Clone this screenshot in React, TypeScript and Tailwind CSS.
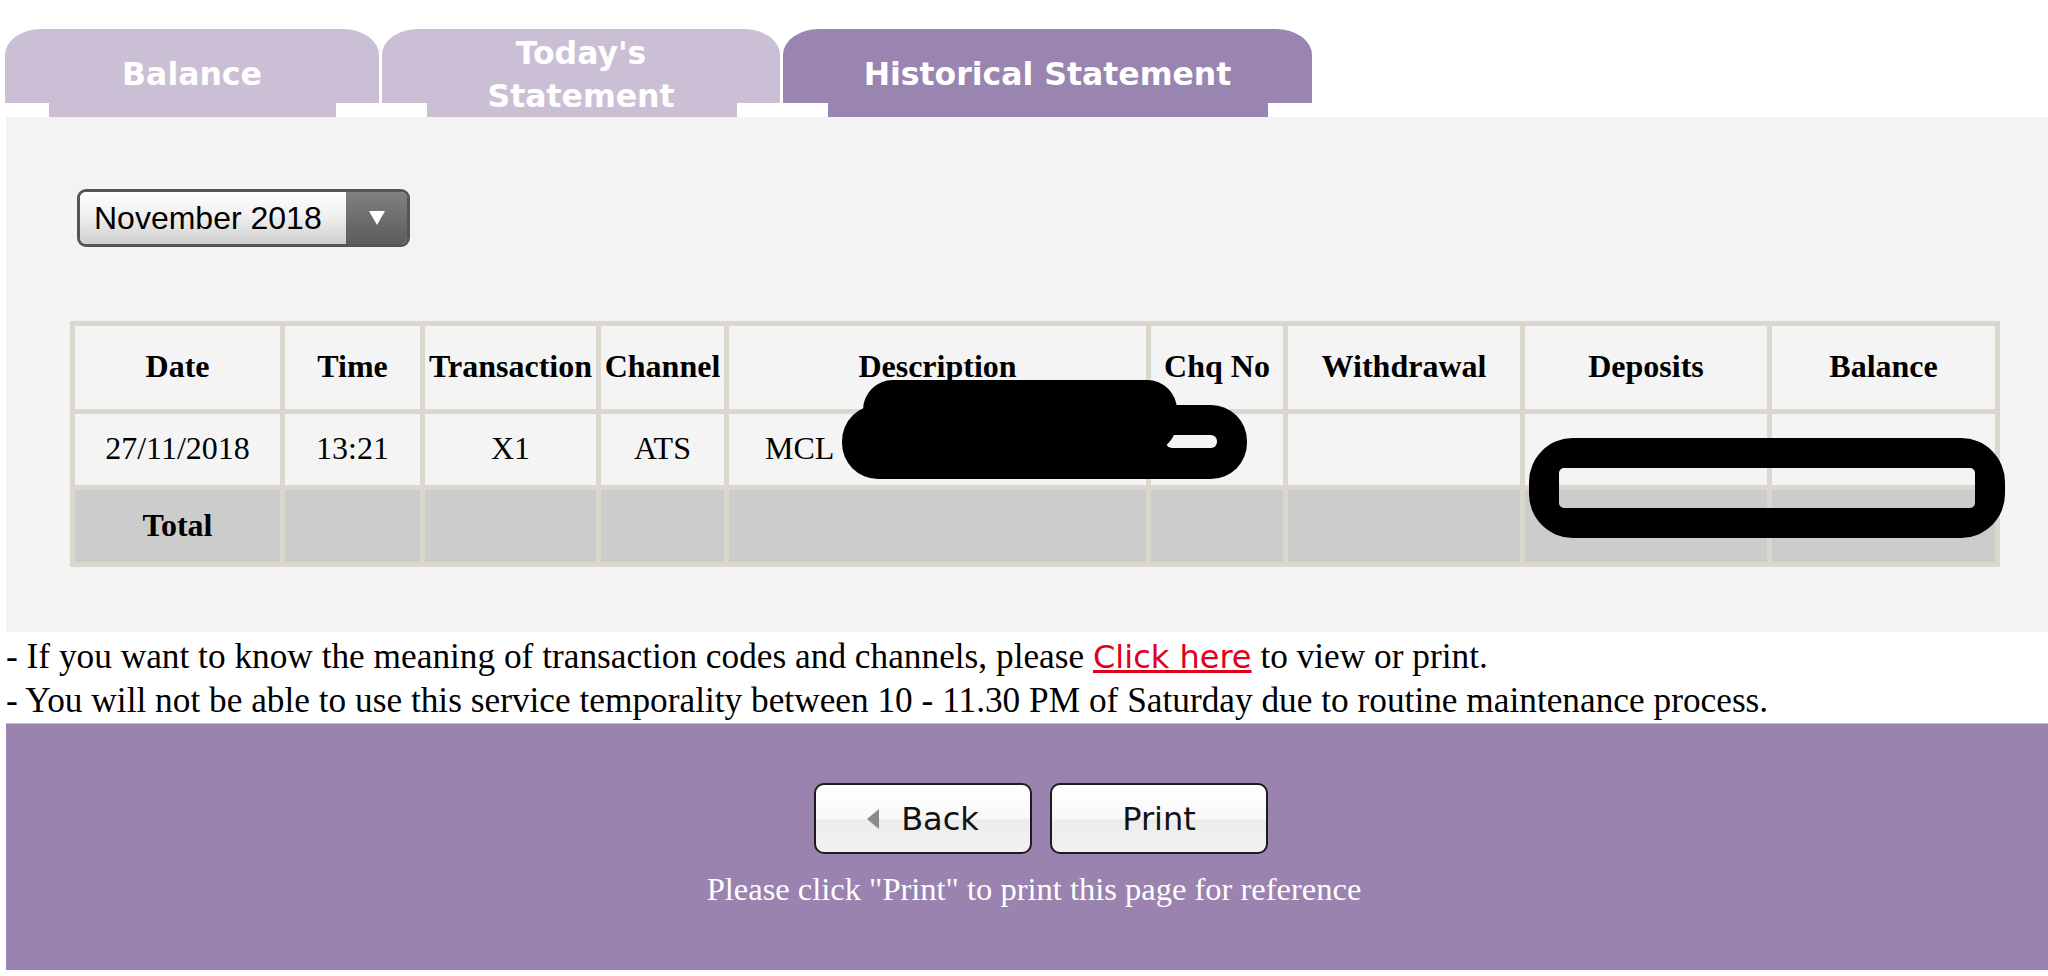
import type { ReactNode } from 'react'

type TabProps = {
  width: string
  inset: string
  active?: boolean
  children: ReactNode
}

function Tab({ width, inset, active, children }: TabProps) {
  const bg = active ? 'bg-[#9a84b0]' : 'bg-[#cbbfd6]'
  return (
    <div className={`flex flex-col ${width}`}>
      <div
        className={`flex h-[74px] items-center justify-center rounded-t-[36px_26px] pt-[17px] text-center font-['DejaVu_Sans',sans-serif] text-[31.5px] font-bold leading-[43px] text-white ${bg}`}
      >
        <div className="relative z-10">{children}</div>
      </div>
      <div className={`h-[14px] ${inset} ${bg}`} />
    </div>
  )
}

const headers = [
  'Date',
  'Time',
  'Transaction',
  'Channel',
  'Description',
  'Chq No',
  'Withdrawal',
  'Deposits',
  'Balance',
]

const colWidths = [
  'w-[205px]',
  'w-[135px]',
  'w-[171px]',
  'w-[123px]',
  'w-[417px]',
  'w-[132px]',
  'w-[232px]',
  'w-[242px]',
  'w-[223px]',
]

function StatementTable() {
  return (
    <table className="ml-[64px] mt-[74px] w-[1930px] table-fixed border-separate border-spacing-[5px] bg-[#dbd6ce] font-['Liberation_Serif',serif] text-[32px] text-black">
      <colgroup>
        {colWidths.map((w, i) => (
          <col key={i} className={w} />
        ))}
      </colgroup>
      <thead>
        <tr>
          {headers.map((h) => (
            <th key={h} className="h-[83px] bg-[#f4f4f4] p-0 pb-[4px] text-center align-middle font-bold whitespace-nowrap">
              {h}
            </th>
          ))}
        </tr>
      </thead>
      <tbody>
        <tr>
          <td className="h-[71px] bg-[#f4f4f4] p-0 pb-[3px] text-center align-middle">27/11/2018</td>
          <td className="bg-[#f4f4f4] p-0 pb-[3px] text-center align-middle">13:21</td>
          <td className="bg-[#f4f4f4] p-0 pb-[3px] text-center align-middle">X1</td>
          <td className="bg-[#f4f4f4] p-0 pb-[3px] text-center align-middle">ATS</td>
          <td className="bg-[#f4f4f4] p-0 pb-[3px] pl-[36px] text-left align-middle">MCL</td>
          <td className="bg-[#f4f4f4] p-0" />
          <td className="bg-[#f4f4f4] p-0" />
          <td className="bg-[#f4f4f4] p-0" />
          <td className="bg-[#f4f4f4] p-0" />
        </tr>
        <tr>
          <td className="h-[72px] bg-[#cccccc] p-0 pb-[3px] text-center align-middle font-bold">Total</td>
          {[0, 1, 2, 3, 4, 5, 6, 7].map((i) => (
            <td key={i} className="bg-[#cccccc] p-0" />
          ))}
        </tr>
      </tbody>
    </table>
  )
}

function MonthSelect() {
  return (
    <div className="ml-[71px] mt-[71px] flex h-[58px] w-[333px] overflow-hidden rounded-[9px] border-[3px] border-[#555555]">
      <div className="flex flex-1 items-center bg-[linear-gradient(#ffffff,#f0f0f0_45%,#cfcfcf)] pl-[14px] font-['Liberation_Sans',sans-serif] text-[32px] text-black">
        November 2018
      </div>
      <div className="flex w-[61px] items-center justify-center bg-[linear-gradient(#808080,#5c5c5c)]">
        <svg width="16" height="14" viewBox="0 0 16 14">
          <path d="M0 0 H16 L8 14 Z" fill="#ffffff" />
        </svg>
      </div>
    </div>
  )
}

function FooterButton({ children }: { children: ReactNode }) {
  return (
    <button className="flex h-[71px] w-[218px] items-center justify-center rounded-[10px] border-2 border-[#1c1c1c] bg-[linear-gradient(#ffffff_0%,#f8f8f8_50%,#ececec_52%,#f2f2f2_100%)] font-['DejaVu_Sans',sans-serif] text-[32px] text-[#111111]">
      {children}
    </button>
  )
}

function Redactions() {
  return (
    <svg className="pointer-events-none absolute left-0 top-0" width="2048" height="976">
      <rect x="842" y="405" width="405" height="74" rx="36" fill="#000" />
      <rect x="1166" y="435" width="51" height="13" rx="6" fill="#f4f4f4" />
      <rect x="863" y="380" width="314" height="72" rx="30" fill="#000" />
      <path
        fillRule="evenodd"
        fill="#000"
        d="M1573 438 H1961 A44 44 0 0 1 2005 482 V494 A44 44 0 0 1 1961 538 H1573 A44 44 0 0 1 1529 494 V482 A44 44 0 0 1 1573 438 Z M1564 468 H1970 A5 5 0 0 1 1975 473 V503 A5 5 0 0 1 1970 508 H1564 A5 5 0 0 1 1559 503 V473 A5 5 0 0 1 1564 468 Z"
      />
    </svg>
  )
}

export default function App() {
  return (
    <div className="relative h-[976px] w-[2048px] overflow-hidden bg-white">
      <div className="flex gap-[3px] pl-[5px] pt-[29px]">
        <Tab width="w-[374px]" inset="ml-[44px] mr-[43px]">
          Balance
        </Tab>
        <Tab width="w-[398px]" inset="ml-[45px] mr-[43px]">
          Today's
          <br />
          Statement
        </Tab>
        <Tab width="w-[529px]" inset="ml-[45px] mr-[44px]" active>
          Historical Statement
        </Tab>
      </div>

      <div className="ml-[6px] h-[515px] bg-[#f3f3f3] pt-px">
        <MonthSelect />
        <StatementTable />
      </div>

      <div className="pl-[6px] pt-[3px] font-['Liberation_Serif',serif] text-[35.3px] leading-[43px] text-black">
        <p>
          - If you want to know the meaning of transaction codes and channels, please{' '}
          <a href="#" className="font-['DejaVu_Sans',sans-serif] text-[32px] text-[#e0001b] underline">
            Click here
          </a>{' '}
          to view or print.
        </p>
        <p>
          - You will not be able to use this service temporality between 10 - 11.30 PM of Saturday due
          to routine maintenance process.
        </p>
      </div>

      <div className="ml-[6px] mt-px flex h-[247px] flex-col items-center border-t border-[#c7bbd4] bg-[#9a83af] pt-[59px]">
        <div className="flex gap-[18px] pl-[28px]">
          <FooterButton>
            <span className="mr-[22px] inline-block h-0 w-0 border-y-[10px] border-r-[12px] border-y-transparent border-r-[#8a8a8a]" />
            Back
          </FooterButton>
          <FooterButton>Print</FooterButton>
        </div>
        <p className="mt-[15px] pl-[14px] font-['Liberation_Serif',serif] text-[32.5px] leading-[40px] text-white">
          Please click "Print" to print this page for reference
        </p>
      </div>

      <Redactions />
    </div>
  )
}
